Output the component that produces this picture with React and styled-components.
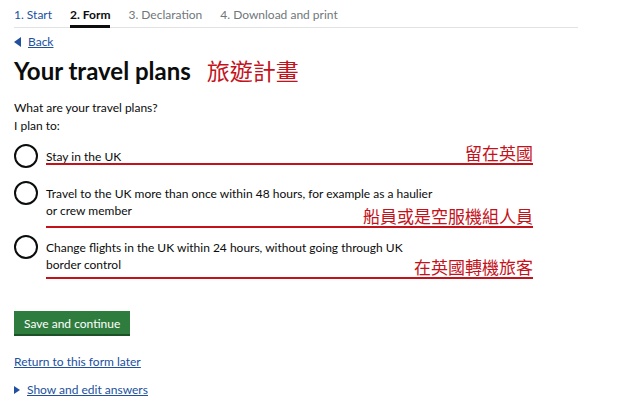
import styled, { createGlobalStyle } from 'styled-components';

const GlobalStyle = createGlobalStyle`
  body {
    margin: 0;
    background: #fff;
    color: #0b0c0c;
    font-family: Lato, "Noto Sans CJK TC", sans-serif;
  }
`;

const Page = styled.main`
  width: 564px;
  padding: 0 14px;
`;

const Steps = styled.ol`
  display: flex;
  gap: 18px;
  margin: 0;
  padding: 6px 0 0;
  list-style: none;
  border-bottom: 1px solid #e1e2e3;
  font-size: 12px;
`;

const Step = styled.li`
  padding-bottom: 2px;
  line-height: 17px;
  color: ${(p) => (p.$state === 'done' ? '#20509e' : p.$state === 'current' ? '#0b0c0c' : '#6f777b')};
  font-weight: ${(p) => (p.$state === 'current' ? 700 : 400)};
  border-bottom: 3px solid ${(p) => (p.$state === 'current' ? '#0b0c0c' : 'transparent')};
  margin-bottom: -1px;
`;

const BackLink = styled.a`
  display: inline-flex;
  align-items: center;
  gap: 7px;
  margin-top: 5px;
  font-size: 12px;
  line-height: 17px;
  color: #20509e;
  text-decoration: none;

  span {
    text-decoration: underline;
  }
`;

const Triangle = styled.span`
  width: 0;
  height: 0;
  border-style: solid;
  border-color: transparent;
  ${(p) =>
    p.$dir === 'left'
      ? `border-width: 5px 7px 5px 0; border-right-color: #20509e;`
      : `border-width: 4px 0 4px 6px; border-left-color: #20509e;`}
`;

const HeadingRow = styled.div`
  display: flex;
  align-items: baseline;
  gap: 16px;
  margin: 6px 0 0;
`;

const Heading = styled.h1`
  margin: 0;
  font-size: 24px;
  line-height: 30px;
  font-weight: 700;
`;

const Note = styled.span`
  color: #c4121b;
  font-family: "Noto Sans CJK TC", sans-serif;
  font-size: ${(p) => p.$size || 17}px;
  line-height: 1.1;
`;

const Question = styled.p`
  margin: 13px 0 0;
  font-size: 12px;
  line-height: 18px;
`;

const Radios = styled.div`
  display: flex;
  flex-direction: column;
  gap: 10px;
  margin-top: 9px;
`;

const Item = styled.label`
  position: relative;
  display: flex;
  align-items: flex-start;
  gap: 8px;
`;

const Circle = styled.span`
  flex: none;
  width: 20px;
  height: 20px;
  border: 2px solid #0b0c0c;
  border-radius: 50%;
`;

const Label = styled.span`
  max-width: 392px;
  padding: 4px 0 6px;
  font-size: 12px;
  line-height: 17px;
`;

const Annotation = styled.span`
  position: absolute;
  left: 32px;
  width: 487px;
  bottom: ${(p) => p.$drop}px;
  text-align: right;
  border-bottom: 2px solid #c4121b;
  line-height: 19px;
`;

const Button = styled.button`
  display: block;
  margin-top: 32px;
  padding: 4px 10px 2px;
  border: 0;
  border-bottom: 2px solid #1c5128;
  background: #2f7d3e;
  color: #fff;
  font-family: inherit;
  font-size: 12px;
  line-height: 17px;
`;

const TextLink = styled.a`
  display: inline-flex;
  align-items: center;
  gap: 7px;
  color: #20509e;
  font-size: 12px;
  line-height: 17px;
  margin-top: ${(p) => p.$top}px;

  span {
    text-decoration: underline;
  }
`;

const options = [
  { text: 'Stay in the UK', note: '留在英國', drop: 6 },
  {
    text: 'Travel to the UK more than once within 48 hours, for example as a haulier or crew member',
    note: '船員或是空服機組人員',
    drop: -3,
  },
  {
    text: 'Change flights in the UK within 24 hours, without going through UK border control',
    note: '在英國轉機旅客',
    drop: 0,
  },
];

export default function App() {
  return (
    <Page>
      <GlobalStyle />
      <Steps>
        <Step $state="done">1. Start</Step>
        <Step $state="current">2. Form</Step>
        <Step>3. Declaration</Step>
        <Step>4. Download and print</Step>
      </Steps>
      <BackLink href="#">
        <Triangle $dir="left" />
        <span>Back</span>
      </BackLink>
      <HeadingRow>
        <Heading>Your travel plans</Heading>
        <Note $size={23}>旅遊計畫</Note>
      </HeadingRow>
      <Question>
        What are your travel plans?
        <br />I plan to:
      </Question>
      <Radios>
        {options.map((o) => (
          <Item key={o.note}>
            <Circle />
            <Label>{o.text}</Label>
            <Annotation $drop={o.drop}>
              <Note>{o.note}</Note>
            </Annotation>
          </Item>
        ))}
      </Radios>
      <Button>Save and continue</Button>
      <div>
        <TextLink href="#" $top={17}>
          <span>Return to this form later</span>
        </TextLink>
      </div>
      <div>
        <TextLink href="#" $top={11}>
          <Triangle $dir="right" />
          <span>Show and edit answers</span>
        </TextLink>
      </div>
    </Page>
  );
}
